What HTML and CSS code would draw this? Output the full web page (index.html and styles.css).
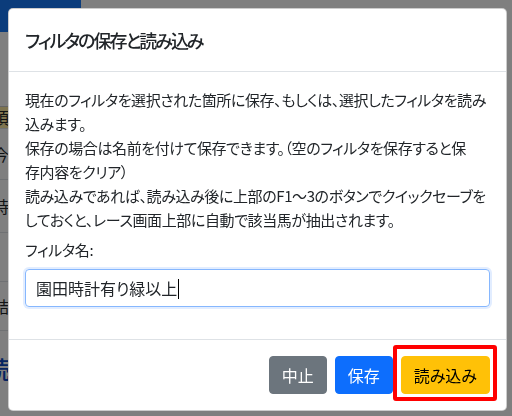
FILE: index.html
```html
<!DOCTYPE html>
<html lang="ja">
<head>
    <meta charset="UTF-8">
    <meta name="viewport" content="width=device-width, initial-scale=1.0">
    <title>フィルタの保存と読み込み</title>
    <link rel="stylesheet" href="styles.css">
</head>
<body>
    <div class="page">
        <div class="brand"></div>
        <table class="list">
            <tr class="head"><th>項目</th></tr>
            <tr class="row-a"><td>今回</td></tr>
            <tr class="row-b"><td>時計</td></tr>
            <tr class="row-gap"><td></td></tr>
            <tr class="row-c"><td>結果</td></tr>
        </table>
        <h2 class="section">読込</h2>
    </div>

    <div class="backdrop"></div>

    <div class="modal">
        <div class="modal-dialog">
            <div class="modal-content">
                <div class="modal-header">
                    <h5 class="modal-title">フィルタの保存と読み込み</h5>
                </div>
                <div class="modal-body">
                    <p class="note">現在のフィルタを選択された箇所に保存、もしくは、選択したフィルタを読み<br>込みます。<br>保存の場合は名前を付けて保存できます。（空のフィルタを保存すると保<br>存内容をクリア）<br>読み込みであれば、読み込み後に上部のF1～3のボタンでクイックセーブを<br>しておくと、レース画面上部に自動で該当馬が抽出されます。</p>
                    <div class="field">
                        <label class="form-label">フィルタ名:</label>
                        <div class="form-control">園田時計有り緑以上<span class="caret"></span></div>
                    </div>
                </div>
                <div class="modal-footer">
                    <button class="btn btn-secondary">中止</button>
                    <button class="btn btn-primary">保存</button>
                    <span class="highlight"><button class="btn btn-warning">読み込み</button></span>
                </div>
            </div>
        </div>
    </div>
</body>
</html>
```

FILE: styles.css
```css
body {
    margin: 0;
    font-family: "Noto Sans CJK JP", "Noto Sans", sans-serif;
    font-feature-settings: "palt";
    font-size: 16px;
    line-height: 1.5;
    color: #212529;
    background-color: #fff;
}

/* page behind the dialog */
.page {
    height: 416px;
    overflow: hidden;
}
.brand {
    width: 81px;
    height: 32px;
    background-color: #1778f6;
}
.list {
    margin: 74px 0 0 -7px;
    width: 300px;
    border-collapse: collapse;
    border-top: 1px solid #c8c8c8;
}
.list th,
.list td {
    padding: 0;
    text-align: left;
    font-weight: 400;
    vertical-align: middle;
    border-bottom: 1px solid #dee2e6;
}
.list .head th {
    height: 21px;
    line-height: 21px;
    background-color: #fde9a0;
}
.row-a td { height: 50px; }
.row-b td { height: 52px; }
.row-gap td { height: 48px; }
.row-c td { height: 48px; }
.section {
    margin: 20px 0 0 -14px;
    font-size: 24px;
    font-weight: 500;
    color: #0d47c0;
}

.backdrop {
    position: fixed;
    inset: 0;
    background-color: rgba(0,0,0,0.5);
}

/* dialog */
.modal {
    position: fixed;
    inset: 0;
}
.modal-dialog {
    width: 499px;
    margin: 8px;
}
.modal-content {
    background-color: #fff;
    border: 1px solid rgba(0,0,0,0.2);
    border-radius: 5px;
}
.modal-header {
    padding: 16px;
    border-bottom: 1px solid #dee2e6;
}
.modal-title {
    margin: 0;
    font-size: 18px;
    font-weight: 500;
    line-height: 30px;
    letter-spacing: -2px;
}
.modal-body {
    padding: 16px;
}
.note {
    margin: 0 0 7px;
    font-size: 15px;
    line-height: 24px;
    letter-spacing: -0.4px;
}
.field {
    margin-bottom: 16px;
}
.form-label {
    display: block;
    margin-bottom: 8px;
    font-size: 15px;
    line-height: 22px;
    letter-spacing: -0.3px;
}
.form-control {
    height: 24px;
    padding: 6px 10px;
    border: 1px solid #86b7fe;
    border-radius: 4px;
    box-shadow: 0 0 0 2px rgba(13,110,253,0.12);
}
.caret {
    display: inline-block;
    width: 1px;
    height: 20px;
    margin-left: 1px;
    vertical-align: -4px;
    background-color: #000;
}
.modal-footer {
    display: flex;
    justify-content: flex-end;
    align-items: center;
    padding: 12px;
    border-top: 1px solid #dee2e6;
}
.btn {
    margin: 4px;
    padding: 6px 12px;
    font-family: inherit;
    font-feature-settings: "palt";
    font-size: 16px;
    line-height: 1.5;
    border: 1px solid transparent;
    border-radius: 4px;
}
.btn-secondary { background-color: #6c757d; border-color: #6c757d; color: #fff; }
.btn-primary { background-color: #0d6efd; border-color: #0d6efd; color: #fff; }
.btn-warning { background-color: #ffc107; border-color: #ffc107; color: #000; }

.highlight {
    position: relative;
    display: inline-flex;
}
.highlight::after {
    content: "";
    position: absolute;
    top: -7px;
    right: -3px;
    bottom: -3px;
    left: -4px;
    border: 4px solid #ff0000;
    border-radius: 3px;
}
```
